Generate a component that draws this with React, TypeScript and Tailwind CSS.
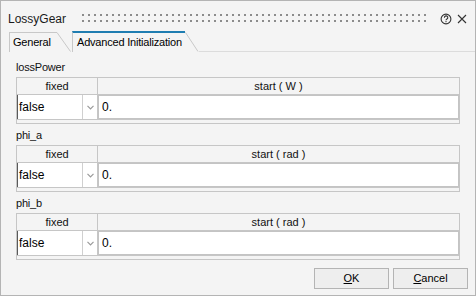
import React from "react";

function Dots() {
  const cols = Array.from({ length: 58 }, (_, i) => i);
  return (
    <svg width="350" height="10" viewBox="0 0 350 10" className="block">
      {cols.map((i) => (
        <g key={i} fill="#8c8c8c">
          <rect x={i * 6} y={0} width={2} height={2} />
          <rect x={i * 6} y={6} width={2} height={2} />
        </g>
      ))}
    </svg>
  );
}

function Section({ label, unit }: { label: string; unit: string }) {
  return (
    <div className="ml-[15px] w-[444px]">
      <div className="h-[14px] flex items-center text-[11px] tracking-[-0.2px] text-[#111]">{label}</div>
      <div className="mt-[3px] border border-[#c6c6c6] flex flex-col">
        <div className="flex h-[17px] border-b border-[#c6c6c6] text-[11px] text-[#111]">
          <div className="w-[81px] border-r border-[#c6c6c6] flex items-center justify-center">fixed</div>
          <div className="flex-1 flex items-center justify-center whitespace-pre">{`start ( ${unit} )`}</div>
        </div>
        <div className="flex h-[25px] border-b border-[#c6c6c6]">
          <div className="w-[81px] flex border-r border-[#c6c6c6] bg-white">
            <div className="w-[66px] border-l border-l-[#5a5a5a] border-r border-r-[#d0d0d0] flex items-center pl-[1px] text-[12px] text-black">
              false
            </div>
            <div className="flex-1 flex items-center justify-center">
              <svg width="7" height="5" viewBox="0 0 7 5">
                <path d="M0.5 0.8 L3.5 3.8 L6.5 0.8" fill="none" stroke="#9a9a9a" strokeWidth="1.2" />
              </svg>
            </div>
          </div>
          <div className="flex-1 bg-white border border-[#c4c4c4] flex items-center pl-[3px] text-[12px] text-black">0.</div>
        </div>
        <div className="h-[3px]" />
      </div>
    </div>
  );
}

export default function App() {
  return (
    <div className="w-[476px] h-[296px] bg-[#f4f4f4] border border-[#b4b4b4] flex flex-col font-['Liberation_Sans',Arial,sans-serif] text-black overflow-hidden">
      <div className="mt-[6px] h-[24px] flex items-center pl-[7px]">
        <div className="w-[74px] text-[12px] text-[#1a1a1a]">LossyGear</div>
        <Dots />
        <div className="ml-[8px] flex items-center">
          <svg width="12" height="12" viewBox="0 0 12 12">
            <circle cx="6" cy="6" r="4.9" fill="none" stroke="#333" strokeWidth="1.1" />
            <path d="M4.4 4.7 A1.7 1.7 0 1 1 6.6 6.2 C6.1 6.5 6 6.8 6 7.3" fill="none" stroke="#333" strokeWidth="1.1" />
            <rect x="5.45" y="8.1" width="1.1" height="1.1" fill="#333" />
          </svg>
          <svg width="10" height="10" viewBox="0 0 10 10" className="ml-[5px]">
            <path d="M1 1 L9 9 M9 1 L1 9" stroke="#333" strokeWidth="1.1" />
          </svg>
        </div>
      </div>
      <div className="flex h-[21px] pl-[8px] text-[11px] text-black whitespace-nowrap">
        <div className="mt-[1px] h-[20px] flex">
          <div className="w-[48px] border-l border-t border-[#c8c8c8] pl-[3px] flex items-center tracking-[-0.2px]">General</div>
          <svg width="14" height="20" viewBox="0 0 14 20" className="block">
            <path d="M0 0.5 L13.5 19.5" stroke="#c8c8c8" strokeWidth="1" fill="none" />
          </svg>
        </div>
        <div className="ml-[1px] h-[21px] flex">
          <div className="w-[113px] border-l border-l-[#c8c8c8] border-t-2 border-t-[#1f7db1] pl-[4px] flex items-center tracking-[-0.2px]">
            Advanced Initialization
          </div>
          <svg width="14" height="21" viewBox="0 0 14 21" className="block">
            <path d="M0.5 1.5 L13 20.5" stroke="#c8c8c8" strokeWidth="1" fill="none" />
          </svg>
        </div>
        <div className="flex-1 border-b border-[#dcdcdc]" />
      </div>
      <div className="mt-[8px] flex flex-col gap-[4px]">
        <Section label="lossPower" unit="W" />
        <Section label="phi_a" unit="rad" />
        <Section label="phi_b" unit="rad" />
      </div>
      <div className="mt-auto mb-[6px] flex justify-end gap-[4px] pr-[7px] text-[11px]">
        <button className="w-[75px] h-[21px] border border-[#b4b4b4] bg-[#eeeeee] flex items-center justify-center">
          <span><span className="underline">O</span>K</span>
        </button>
        <button className="w-[75px] h-[21px] border border-[#b4b4b4] bg-[#eeeeee] flex items-center justify-center">
          <span><span className="underline">C</span>ancel</span>
        </button>
      </div>
    </div>
  );
}
